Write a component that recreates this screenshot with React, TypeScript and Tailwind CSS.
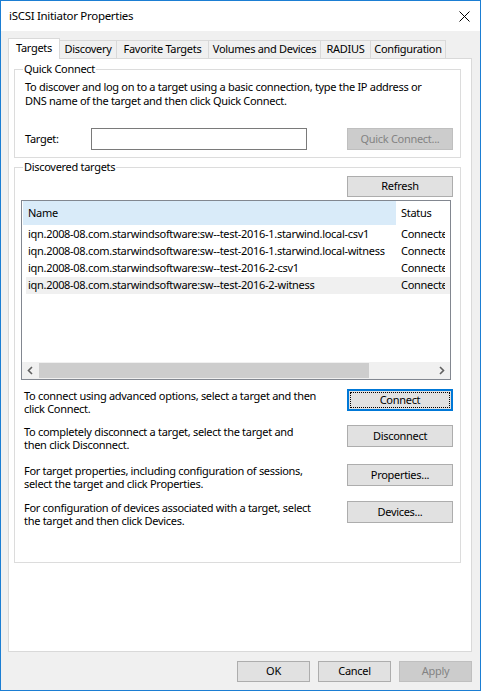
const tabs = [
  { label: "Targets", w: "w-[52px]" },
  { label: "Discovery", w: "w-[57px]" },
  { label: "Favorite Targets", w: "w-[92px]" },
  { label: "Volumes and Devices", w: "w-[112px]" },
  { label: "RADIUS", w: "w-[50px]" },
  { label: "Configuration", w: "w-[75px]" },
];

const targets = [
  "iqn.2008-08.com.starwindsoftware:sw--test-2016-1.starwind.local-csv1",
  "iqn.2008-08.com.starwindsoftware:sw--test-2016-1.starwind.local-witness",
  "iqn.2008-08.com.starwindsoftware:sw--test-2016-2-csv1",
  "iqn.2008-08.com.starwindsoftware:sw--test-2016-2-witness",
];

const actions = [
  {
    text: ["To connect using advanced options, select a target and then", "click Connect."],
    button: "Connect",
    mt: "mt-[9px]",
    focused: true,
  },
  {
    text: ["To completely disconnect a target, select the target and", "then click Disconnect."],
    button: "Disconnect",
    mt: "mt-[10px]",
  },
  {
    text: ["For target properties, including configuration of sessions,", "select the target and click Properties."],
    button: "Properties...",
    mt: "mt-[13px]",
  },
  {
    text: ["For configuration of devices associated with a target, select", "the target and then click Devices."],
    button: "Devices...",
    mt: "mt-[11px]",
  },
];

function Button({
  children,
  className = "",
  disabled,
  focused,
}: {
  children: React.ReactNode;
  className?: string;
  disabled?: boolean;
  focused?: boolean;
}) {
  if (focused) {
    return (
      <div className={`flex items-center justify-center border-2 border-[#0078d7] bg-[#e1e1e1] p-px ${className}`}>
        <div className="flex h-full w-full items-center justify-center border border-dotted border-black">
          {children}
        </div>
      </div>
    );
  }
  return (
    <div
      className={`flex items-center justify-center border ${
        disabled ? "border-[#bfbfbf] bg-[#cccccc] text-[#838383]" : "border-[#adadad] bg-[#e1e1e1]"
      } ${className}`}
    >
      {children}
    </div>
  );
}

function Chevron({ dir }: { dir: "left" | "right" }) {
  return (
    <svg width="7" height="9" viewBox="0 0 7 9">
      <polyline
        points={dir === "left" ? "5,1 1.5,4.5 5,8" : "2,1 5.5,4.5 2,8"}
        fill="none"
        stroke="#606060"
        strokeWidth="1.6"
      />
    </svg>
  );
}

export default function App() {
  return (
    <div className="flex h-[691px] w-[481px] flex-col border border-[#1b7ed3] bg-[#f0f0f0] font-['Noto_Sans',sans-serif] text-[11px] tracking-[-0.3px] text-black">
      {/* Title bar */}
      <div className="flex h-[30px] items-center justify-between bg-white pl-[8px] pr-[10px] text-[11.5px]">
        <span>iSCSI Initiator Properties</span>
        <svg width="11" height="11" viewBox="0 0 11 11">
          <path d="M0.5 0.5 L10.5 10.5 M10.5 0.5 L0.5 10.5" stroke="#000" strokeWidth="1" />
        </svg>
      </div>

      <div className="flex flex-1 flex-col px-[7px] pt-[7px]">
        {/* Tabs */}
        <div className="flex h-[20px] items-end">
          {tabs.map((t, i) =>
            i === 0 ? (
              <div
                key={t.label}
                className={`relative z-10 -mb-px flex h-[21px] items-center justify-center border border-b-0 border-[#d9d9d9] bg-white pb-[2px] ${t.w}`}
              >
                {t.label}
              </div>
            ) : (
              <div
                key={t.label}
                className={`flex h-[18px] items-center justify-center border-t border-r border-[#d9d9d9] bg-[#f0f0f0] ${t.w}`}
              >
                {t.label}
              </div>
            )
          )}
        </div>

        {/* Panel */}
        <div className="flex h-[594px] w-[464px] flex-col border border-[#d9d9d9] bg-white pl-[5px]">
          <fieldset className="mt-[3px] flex h-[96px] w-[447px] flex-col border border-[#dcdcdc] pl-[10px] pr-[7px]">
            <legend className="ml-[-2px] px-[1px] leading-[14px]">Quick Connect</legend>
            <p className="mt-[4px] leading-[14px]">
              To discover and log on to a target using a basic connection, type the IP address or
              <br />
              DNS name of the target and then click Quick Connect.
            </p>
            <div className="mt-[20px] flex items-center">
              <span className="w-[66px]">Target:</span>
              <div className="h-[22px] w-[216px] border border-[#7a7a7a] bg-white" />
              <Button disabled className="ml-auto h-[22px] w-[106px]">
                Quick Connect...
              </Button>
            </div>
          </fieldset>

          <fieldset className="mt-[2px] flex h-[403px] w-[447px] flex-col border border-[#dcdcdc] pr-[7px]">
            <legend className="ml-[8px] px-[1px] leading-[14px]">Discovered targets</legend>
            <Button className="mt-[2px] h-[21px] w-[106px] self-end">Refresh</Button>

            {/* List view */}
            <div className="ml-[6px] mt-[3px] flex h-[180px] w-[430px] flex-col border border-[#828790] bg-white">
              <div className="flex h-[24px] shrink-0 items-center">
                <div className="ml-px flex h-full w-[373px] items-center bg-[#d9ebf9] pl-[5px]">Name</div>
                <div className="pl-[5px]">Status</div>
              </div>
              <div className="flex-1 overflow-hidden pt-px">
                {targets.map((t, i) => (
                  <div
                    key={t}
                    className={`ml-[4px] flex h-[17px] items-center whitespace-nowrap ${i === 3 ? "bg-[#f0f0f0]" : ""}`}
                  >
                    <div className="w-[370px] shrink-0 pl-[2px]">{t}</div>
                    <div className="w-[49px] overflow-hidden pl-[5px]">Connected</div>
                  </div>
                ))}
              </div>
              <div className="flex h-[17px] shrink-0 items-center bg-[#f0f0f0]">
                <div className="flex h-full w-[17px] items-center justify-center">
                  <Chevron dir="left" />
                </div>
                <div className="h-[15px] w-[330px] bg-[#cdcdcd]" />
                <div className="flex-1" />
                <div className="flex h-full w-[17px] items-center justify-center">
                  <Chevron dir="right" />
                </div>
              </div>
            </div>

            {actions.map((a) => (
              <div key={a.button} className={`ml-[9px] flex items-start justify-between ${a.mt}`}>
                <p className="leading-[13px]">
                  {a.text[0]}
                  <br />
                  {a.text[1]}
                </p>
                <Button focused={a.focused} className="h-[22px] w-[106px]">
                  {a.button}
                </Button>
              </div>
            ))}
          </fieldset>
        </div>

        {/* Dialog buttons */}
        <div className="mt-[9px] flex justify-end gap-[8px] pr-[1px]">
          <Button className="h-[21px] w-[73px]">OK</Button>
          <Button className="h-[21px] w-[73px]">Cancel</Button>
          <Button disabled className="h-[21px] w-[73px]">
            Apply
          </Button>
        </div>
      </div>
    </div>
  );
}
